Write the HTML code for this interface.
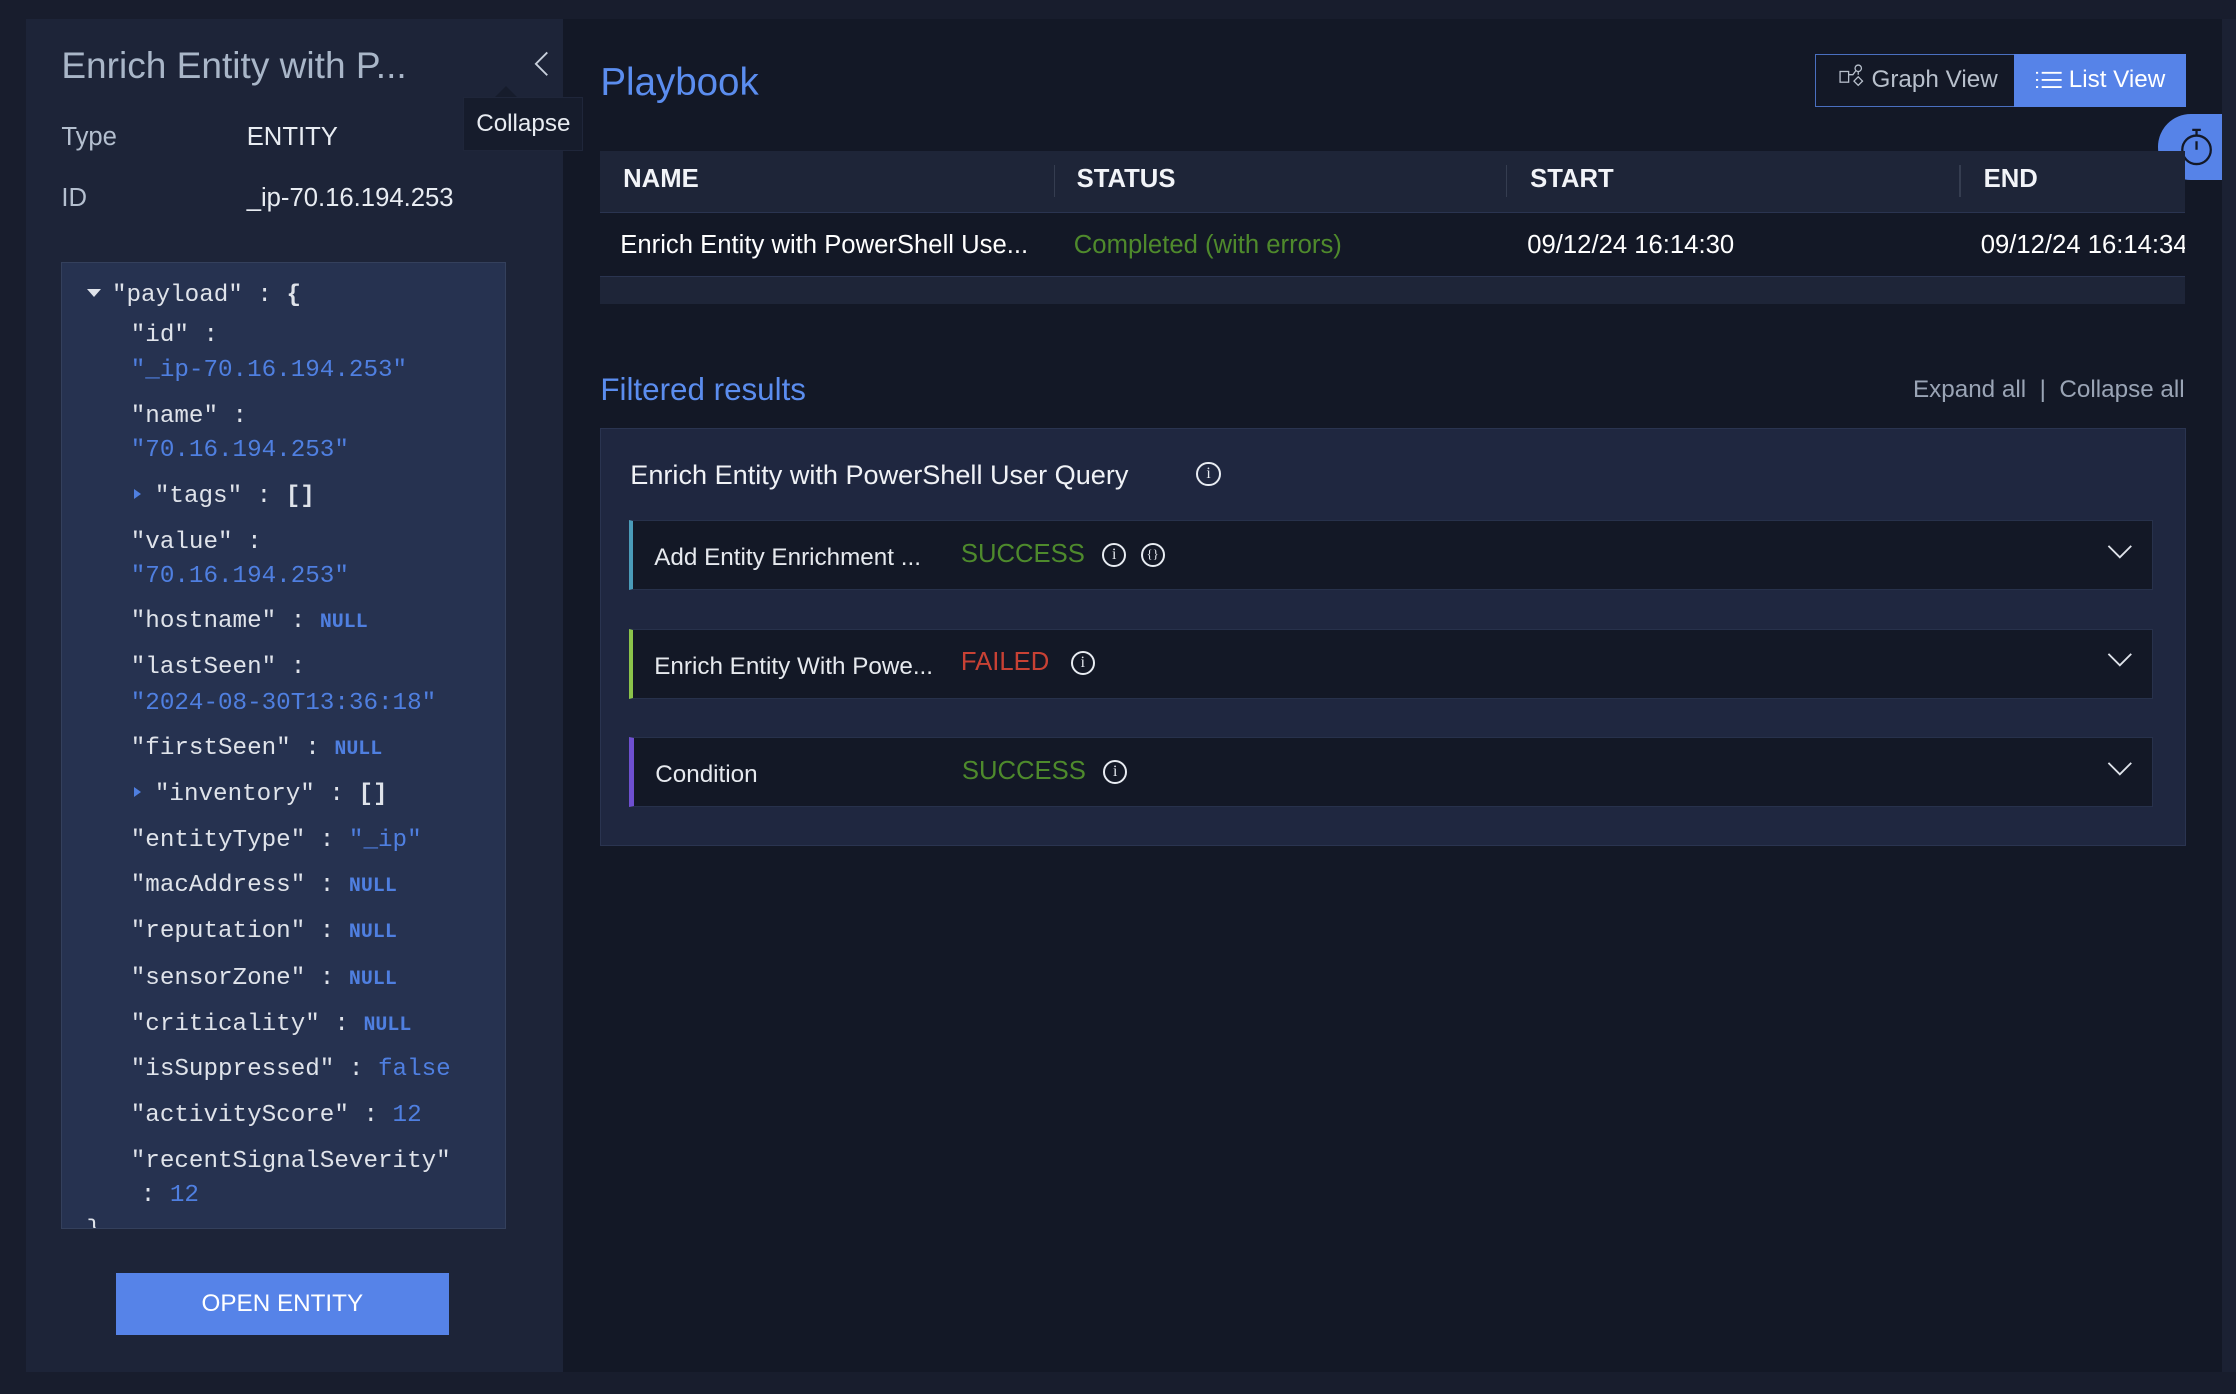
<!DOCTYPE html>
<html><head><meta charset="utf-8"><style>
*{box-sizing:border-box;margin:0;padding:0}
html,body{width:2236px;height:1394px;overflow:hidden;background:#181d2d}
#w{zoom:1.42602;width:1568px;height:978px;position:relative;font-family:"Liberation Sans",sans-serif;color:#e8ecf2}
.a{position:absolute;white-space:nowrap}
.mono{font-family:"Liberation Mono",monospace;font-size:17px;color:#dfe3ea}
.b{color:#4f7fe0}
.n{color:#4f7fe0;font-size:14px;font-weight:bold}
.t{display:inline-block;width:0;height:0;border-left:5px solid #dfe3ea;border-top:4px solid transparent;border-bottom:4px solid transparent;margin-right:10px;vertical-align:2px}
.row{position:absolute;left:441px;width:1069px;height:49px;background:#131826;border:1px solid #27314b}
.row .nm{position:absolute;left:15px;top:16px;font-size:17px;color:#e6e9ee}
.row .st{position:absolute;left:230px;top:13px;font-size:18px}
.ic{position:absolute;width:17px;height:17px;border:1.5px solid #e8ecf2;border-radius:50%;font-size:11px;line-height:14px;text-align:center;font-family:"Liberation Serif",serif;color:#e8ecf2}
.chev{position:absolute;right:14px;top:15px}
.th{position:absolute;top:0;height:44px;line-height:40px;font-size:18px;font-weight:bold;color:#f2f4f8}
.sep{position:absolute;top:10px;width:1px;height:22px;background:#353d50}
</style></head><body><div id="w">
<div class="a" style="left:18px;top:13px;width:377px;height:949px;background:#1d2438"></div>
<div class="a" style="left:395px;top:13px;width:1163px;height:949px;background:#131826"></div>
<div class="a" style="left:1558px;top:13px;width:10px;height:949px;background:#1b2133"></div>

<div class="a" style="left:43px;top:31px;font-size:26px;color:#a9b6c8">Enrich Entity with P...</div>
<svg class="a" style="left:374px;top:36px" width="12" height="18"><path d="M10 1 L2 9 L10 17" stroke="#c8d0dc" stroke-width="1.3" fill="none"/></svg>
<div class="a" style="left:325px;top:68px;width:84px;height:38px;background:#161c2c;border:1px solid #1f263a;font-size:17px;line-height:36px;text-align:center;color:#e8ecf2">Collapse</div>
<div class="a" style="left:347px;top:60px;width:0;height:0;border-left:8px solid transparent;border-right:8px solid transparent;border-bottom:8px solid #161c2c"></div>
<div class="a" style="left:43px;top:86px;font-size:18px;color:#b4bfcf">Type</div>
<div class="a" style="left:173px;top:86px;font-size:18px;color:#e8ecf2">ENTITY</div>
<div class="a" style="left:43px;top:129px;font-size:18px;color:#b4bfcf">ID</div>
<div class="a" style="left:173px;top:129px;font-size:18px;color:#e8ecf2">_ip-70.16.194.253</div>

<div class="a" style="left:43px;top:184px;width:312px;height:678px;background:#263250;border:1px solid #34405c;overflow:hidden">
<div class="mono" style="position:relative">
<div class="a" style="left:17px;top:13px"><span class="t" style="border-left:5px solid transparent;border-right:5px solid transparent;border-top:6px solid #dfe3ea;border-bottom:0;vertical-align:3px;margin-right:8px"></span>"payload" : <b>{</b></div>
<div class="a" style="left:48px;top:41px">"id" :</div>
<div class="a b" style="left:48px;top:66px">"_ip-70.16.194.253"</div>
<div class="a" style="left:48px;top:98px">"name" :</div>
<div class="a b" style="left:48px;top:122px">"70.16.194.253"</div>
<div class="a" style="left:50px;top:154px"><span class="t" style="border-left-color:#4f7fe0"></span>"tags" : <b>[]</b></div>
<div class="a" style="left:48px;top:186px">"value" :</div>
<div class="a b" style="left:48px;top:210px">"70.16.194.253"</div>
<div class="a" style="left:48px;top:242px">"hostname" : <span class="n">NULL</span></div>
<div class="a" style="left:48px;top:274px">"lastSeen" :</div>
<div class="a b" style="left:48px;top:299px">"2024-08-30T13:36:18"</div>
<div class="a" style="left:48px;top:331px">"firstSeen" : <span class="n">NULL</span></div>
<div class="a" style="left:50px;top:363px"><span class="t" style="border-left-color:#4f7fe0"></span>"inventory" : <b>[]</b></div>
<div class="a" style="left:48px;top:395px">"entityType" : <span class="b">"_ip"</span></div>
<div class="a" style="left:48px;top:427px">"macAddress" : <span class="n">NULL</span></div>
<div class="a" style="left:48px;top:459px">"reputation" : <span class="n">NULL</span></div>
<div class="a" style="left:48px;top:492px">"sensorZone" : <span class="n">NULL</span></div>
<div class="a" style="left:48px;top:524px">"criticality" : <span class="n">NULL</span></div>
<div class="a" style="left:48px;top:556px">"isSuppressed" : <span class="b">false</span></div>
<div class="a" style="left:48px;top:588px">"activityScore" : <span class="b">12</span></div>
<div class="a" style="left:48px;top:620px">"recentSignalSeverity"</div>
<div class="a" style="left:55px;top:644px">: <span class="b">12</span></div>
<div class="a" style="left:17px;top:669px">}</div>
</div></div>
<div class="a" style="left:81px;top:893px;width:234px;height:43px;background:#5683e8;color:#fff;font-size:17px;line-height:43px;text-align:center">OPEN ENTITY</div>

<div class="a" style="left:421px;top:43px;font-size:27px;color:#5b8def">Playbook</div>
<div class="a" style="left:1273px;top:38px;width:140px;height:37px;border:1px solid #4a6fc0;border-right:0;background:#131826;font-size:17px;line-height:35px;color:#b8c0cc;padding-left:16px">
<svg style="vertical-align:-2px" width="18" height="18" viewBox="0 0 24 24" fill="none" stroke="#b8c0cc" stroke-width="1.2"><rect x="1" y="7" width="8" height="10"/><circle cx="18" cy="4" r="3"/><path d="M18 7v3M14 16l4-4 4 4-4 4z M9 10h4l3-4"/></svg> Graph View</div>
<div class="a" style="left:1412px;top:38px;width:121px;height:37px;background:#5683e8;font-size:17px;line-height:37px;color:#fff;padding-left:16px">
<svg style="vertical-align:-2px" width="18" height="14" viewBox="0 0 18 14" stroke="#fff" stroke-width="1.3"><path d="M4 2h14M4 7h14M4 12h14M0 2h1.5M0 7h1.5M0 12h1.5"/></svg> List View</div>
<div class="a" style="left:1513px;top:80px;width:45px;height:46px;background:#5683e8;border-radius:23px 0 0 23px"></div>
<svg class="a" style="left:1527px;top:89px" width="26" height="28" viewBox="0 0 26 28" fill="none" stroke="#131826" stroke-width="1.6"><circle cx="13" cy="16" r="10"/><path d="M13 6V2M10 2h6M13 10v6"/></svg>

<div class="a" style="left:421px;top:106px;width:1111px;height:107px;background:#1e2538;overflow:hidden">
<div class="th" style="left:16px">NAME</div>
<div class="sep" style="left:318px"></div><div class="th" style="left:334px">STATUS</div>
<div class="sep" style="left:635px"></div><div class="th" style="left:652px">START</div>
<div class="sep" style="left:953px"></div><div class="th" style="left:970px">END</div>
<div class="a" style="left:0;top:43px;width:1111px;height:45px;background:#131826;border-top:1px solid #2a3450;border-bottom:1px solid #2a3450;font-size:18px;line-height:45px">
<span class="a" style="left:14px;color:#fff">Enrich Entity with PowerShell Use...</span>
<span class="a" style="left:332px;color:#4f8a2c">Completed (with errors)</span>
<span class="a" style="left:650px;color:#fff">09/12/24 16:14:30</span>
<span class="a" style="left:968px;color:#fff">09/12/24 16:14:34</span>
</div></div>

<div class="a" style="left:421px;top:261px;font-size:22px;color:#5b8def">Filtered results</div>
<div class="a" style="right:36px;top:264px;font-size:17px;color:#9aa4b5">Expand all &nbsp;|&nbsp; Collapse all</div>

<div class="a" style="left:421px;top:300px;width:1112px;height:293px;background:#1f2740;border:1px solid #2a3450"></div>
<div class="a" style="left:442px;top:322px;font-size:19px;color:#f0f2f6">Enrich Entity with PowerShell User Query</div>
<div class="ic" style="left:839px;top:324px">i</div>

<div class="row" style="top:365px;border-left:3px solid #4a9bb8"><span class="a nm">Add Entity Enrichment ...</span><span class="a st" style="color:#4e8a2c">SUCCESS</span><div class="ic" style="left:329px;top:15px">i</div><div class="ic" style="left:356px;top:15px;font-size:9px">{}</div><svg class="chev" width="18" height="12"><path d="M1 2l8 8 8-8" stroke="#dfe3ea" stroke-width="1.3" fill="none"/></svg></div>
<div class="row" style="top:441px;border-left:3px solid #8bc34a"><span class="a nm">Enrich Entity With Powe...</span><span class="a st" style="color:#c84134">FAILED</span><div class="ic" style="left:307px;top:15px">i</div><svg class="chev" width="18" height="12"><path d="M1 2l8 8 8-8" stroke="#dfe3ea" stroke-width="1.3" fill="none"/></svg></div>
<div class="row" style="top:517px;border-left:4px solid #6e4fd0"><span class="a nm">Condition</span><span class="a st" style="color:#4e8a2c">SUCCESS</span><div class="ic" style="left:329px;top:15px">i</div><svg class="chev" width="18" height="12"><path d="M1 2l8 8 8-8" stroke="#dfe3ea" stroke-width="1.3" fill="none"/></svg></div>
</div></body></html>
